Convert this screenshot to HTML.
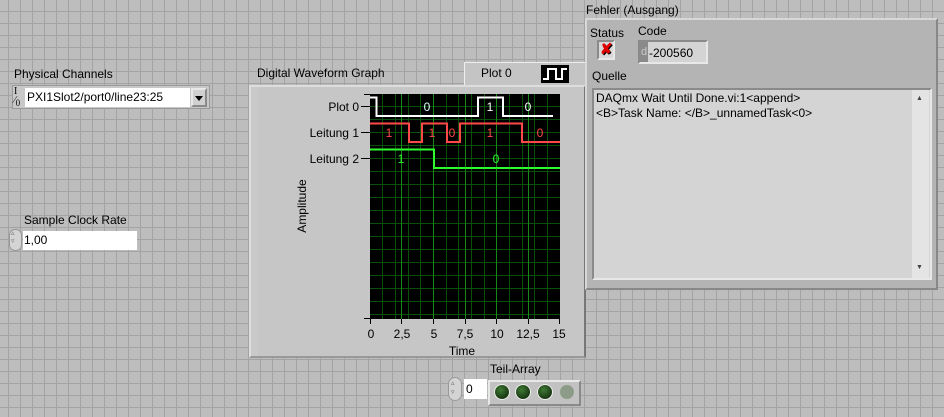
<!DOCTYPE html>
<html><head><meta charset="utf-8"><style>
*{margin:0;padding:0;box-sizing:border-box}
body{width:944px;height:417px;overflow:hidden;position:relative;font-family:"Liberation Sans",sans-serif;font-size:12px;color:#000;
background-color:#bdbdbd;
background-image:linear-gradient(to right,#a3a3a3 1px,transparent 1px),linear-gradient(to bottom,#a3a3a3 1px,transparent 1px);
background-size:12px 12px;background-position:8px 11px}
.a{position:absolute;white-space:nowrap}
.t{font-size:12px;line-height:14px}
.bev{border:2px solid;border-color:#8a8a8a #e8e8e8 #e8e8e8 #8a8a8a}
.out{border:2px solid;border-color:#e8e8e8 #8a8a8a #8a8a8a #e8e8e8}
</style></head><body>

<div class="a t" style="left:14px;top:67px">Physical Channels</div>
<div class="a" style="left:12px;top:85px;width:198px;height:24px;background:#c8c8c8;border:1px solid #999"></div>
<div class="a" style="left:14px;top:87px;font-size:10px;line-height:9px;font-family:'Liberation Serif',serif">I<br>⁄<sub style="font-size:9px">0</sub></div>
<div class="a t" style="left:25px;top:88px;width:165px;height:19px;background:#fff;padding:2px 2px">PXI1Slot2/port0/line23:25</div>
<div class="a out" style="left:191px;top:88px;width:16px;height:19px;background:#d0d0d0"></div>
<div class="a" style="left:195px;top:96px;border-left:4px solid transparent;border-right:4px solid transparent;border-top:5px solid #000"></div>

<div class="a t" style="left:24px;top:213px">Sample Clock Rate</div>
<div class="a" style="left:9px;top:229px;width:13px;height:22px;background:#d4d4d4;border:1px solid #999;border-radius:6px"></div>
<div class="a" style="left:11px;top:229px;font-size:7px;color:#666">▵<br>▿</div>
<div class="a t" style="left:23px;top:231px;width:114px;height:19px;background:#fff;padding:2px 1px">1,00</div>

<div class="a t" style="left:257px;top:66px">Digital Waveform Graph</div>
<div class="a" style="left:464px;top:62px;width:122px;height:24px;background:#c4c4c4;border:1px solid;border-color:#eee #888 #888 #eee"></div>
<div class="a t" style="left:481px;top:66px">Plot 0</div>
<div class="a" style="left:541px;top:65px;width:28px;height:18px;background:#000"></div>
<svg class="a" style="left:541px;top:65px" width="28" height="18"><path d="M2 14H7V4H15V14H21V4H26" stroke="#fff" stroke-width="2" fill="none"/></svg>
<div class="a" style="left:249px;top:85px;width:337px;height:273px;background:#c9c9c9;border:2px solid;border-color:#ddd #777 #999 #ddd"></div>
<div class="a" style="left:258px;top:87px;width:326px;height:269px;background:#c6c6c6"></div>

<svg class="a" style="left:249px;top:85px" width="337" height="273" font-family="Liberation Sans" font-size="12">
<g transform="translate(-249,-85)">
<rect x="370" y="94" width="190" height="225" fill="#000"/>
<g stroke="#0a4f0a" stroke-width="1">
<path d="M382.5 94V319M395.5 94V319M408.5 94V319M420.5 94V319M446.5 94V319M458.5 94V319M471.5 94V319M484.5 94V319M509.5 94V319M522.5 94V319M534.5 94V319M547.5 94V319"/>
<path d="M370 106.5H560M370 119.5H560M370 132.5H560M370 145.5H560M370 158.5H560M370 171.5H560M370 184.5H560M370 197.5H560M370 210.5H560M370 223.5H560M370 236.5H560M370 249.5H560M370 262.5H560M370 275.5H560M370 288.5H560M370 301.5H560M370 314.5H560"/>
</g>
<g stroke="#168a16"><path d="M401.5 94V319M433.5 94V319M465.5 94V319M496.5 94V319M528.5 94V319"/></g>
<path d="M370 97.5H376.5V116H478V97.5H503V116H553" stroke="#fff" stroke-width="2" fill="none"/>
<path d="M370 123.5H409V142H422V123.5H447V142H460V123.5H522V142H560" stroke="#ff4848" stroke-width="2" fill="none"/>
<path d="M370 149.5H434V168H560" stroke="#2cff2c" stroke-width="2" fill="none"/>
<g font-size="12" text-anchor="middle">
<text x="427" y="111" fill="#dff">0</text><text x="490" y="111" fill="#fff">1</text><text x="528" y="111" fill="#fff">0</text>
<text x="389" y="137" fill="#ff4848">1</text><text x="432" y="137" fill="#ff4848">1</text><text x="452" y="137" fill="#ff4848">0</text><text x="490" y="137" fill="#ff4848">1</text><text x="540" y="137" fill="#ff4848">0</text>
<text x="401" y="163" fill="#2cff2c">1</text><text x="496" y="163" fill="#2cff2c">0</text>
</g>
<g stroke="#000"><path d="M364 94.5H370M361 106.5H370M361 132.5H370M361 158.5H370M364 318.5H370M370.5 319V324M401.5 319V324M433.5 319V324M465.5 319V324M496.5 319V324M528.5 319V324M559.5 319V324"/></g>
<g text-anchor="end"><text x="359" y="111">Plot 0</text><text x="359" y="137">Leitung 1</text><text x="359" y="163">Leitung 2</text></g>
<g text-anchor="middle"><text x="371" y="338">0</text><text x="402" y="338">2,5</text><text x="434" y="338">5</text><text x="465" y="338">7,5</text><text x="497" y="338">10</text><text x="528" y="338">12,5</text><text x="559" y="338">15</text>
<text x="462" y="355">Time</text>
<text transform="translate(306,206) rotate(-90)">Amplitude</text></g>
</g></svg>

<div class="a t" style="left:586px;top:3px">Fehler (Ausgang)</div>
<div class="a" style="left:585px;top:18px;width:353px;height:272px;background:#b4b4b4;border:2px solid;border-color:#d8d8d8 #888 #888 #d8d8d8"></div>
<div class="a t" style="left:590px;top:26px">Status</div>
<div class="a t" style="left:638px;top:24px">Code</div>
<div class="a bev" style="left:597px;top:40px;width:18px;height:20px;background:#d8d8d8"></div>
<div class="a" style="left:600px;top:41px;color:#e00000;font-weight:bold;font-size:15px;line-height:17px;text-shadow:1px 1px 0 #000">✘</div>
<div class="a bev" style="left:638px;top:40px;width:70px;height:24px;background:#d4d4d4"></div>
<div class="a" style="left:640px;top:42px;width:8px;height:20px;background:#8a8a8a;color:#ccc;font-size:11px;line-height:20px;padding-left:1px">d</div>
<div class="a t" style="left:649px;top:46px">-200560</div>
<div class="a t" style="left:592px;top:69px">Quelle</div>
<div class="a bev" style="left:592px;top:88px;width:340px;height:192px;background:#d4d4d4"></div>
<div class="a" style="left:912px;top:90px;width:17px;height:188px;background:#e4e4e4"></div>
<div class="a" style="left:916px;top:95px;font-size:7px;color:#444">▲</div>
<div class="a" style="left:916px;top:264px;font-size:7px;color:#444">▼</div>
<div class="a t" style="left:596px;top:91px;line-height:15px">DAQmx Wait Until Done.vi:1&lt;append&gt;<br>&lt;B&gt;Task Name: &lt;/B&gt;_unnamedTask&lt;0&gt;</div>

<div class="a t" style="left:490px;top:362px">Teil-Array</div>
<div class="a" style="left:448px;top:377px;width:14px;height:24px;background:#d4d4d4;border:1px solid #999;border-radius:7px"></div>
<div class="a" style="left:451px;top:379px;font-size:7px;color:#666;line-height:9px">▵<br>▿</div>
<div class="a t" style="left:464px;top:379px;width:23px;height:20px;background:#fff;padding:3px 2px">0</div>
<div class="a out" style="left:488px;top:380px;width:93px;height:26px;background:#c2c2c2"></div>
<svg class="a" style="left:488px;top:380px" width="93" height="26">
<defs><radialGradient id="g" cx="40%" cy="35%" r="60%"><stop offset="0" stop-color="#3f7a35"/><stop offset="1" stop-color="#1a3a14"/></radialGradient></defs>
<circle cx="14" cy="12" r="8" fill="#eee"/><circle cx="14" cy="12" r="7" fill="url(#g)"/>
<circle cx="35" cy="12" r="8" fill="#eee"/><circle cx="35" cy="12" r="7" fill="url(#g)"/>
<circle cx="57" cy="12" r="8" fill="#eee"/><circle cx="57" cy="12" r="7" fill="url(#g)"/>
<circle cx="79" cy="12" r="7" fill="#8c9c88"/>
</svg>
</body></html>
